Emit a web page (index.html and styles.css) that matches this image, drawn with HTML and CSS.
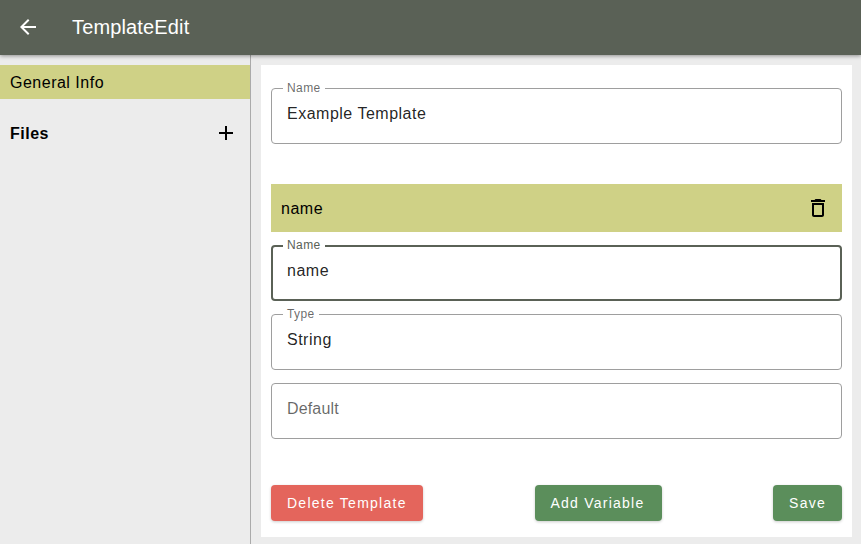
FILE: index.html
```html
<!DOCTYPE html>
<html lang="en">
<head>
<meta charset="utf-8">
<title>TemplateEdit</title>
<link rel="stylesheet" href="styles.css">
</head>
<body>
<header class="topbar">
  <svg class="icon" viewBox="0 0 24 24"><path d="M20 11H7.83l5.59-5.59L12 4l-8 8 8 8 1.41-1.41L7.83 13H20v-2z"/></svg>
  <h1 class="title">TemplateEdit</h1>
</header>
<div class="layout">
  <nav class="sidebar">
    <div class="nav-item">General Info</div>
    <div class="files"><span class="heading">Files</span>
      <svg class="icon" viewBox="0 0 24 24"><path d="M19 13h-6v6h-2v-6H5v-2h6V5h2v6h6v2z"/></svg>
    </div>
  </nav>
  <main class="panel">
    <div class="field"><span class="label">Name</span><span class="value">Example Template</span></div>
    <div class="variable-head"><span class="heading">name</span>
      <svg class="icon" viewBox="0 0 24 24"><path fill-rule="evenodd" d="M6 19c0 1.1.9 2 2 2h8c1.1 0 2-.9 2-2V7H6v12zM8 9h8v10H8V9zm7.500-5l-1-1h-5l-1 1H5v2h14V4h-3.500z"/></svg>
    </div>
    <div class="field focused"><span class="label">Name</span><span class="value">name</span></div>
    <div class="field"><span class="label">Type</span><span class="value">String</span></div>
    <div class="field"><span class="value placeholder">Default</span></div>
    <div class="actions">
      <button class="button danger">Delete Template</button>
      <button class="button add">Add Variable</button>
      <button class="button">Save</button>
    </div>
  </main>
</div>
</body>
</html>
```
FILE: styles.css
```css
* { box-sizing: border-box; }
body {
  margin: 0;
  height: 544px;
  overflow: hidden;
  display: flex;
  flex-direction: column;
  background: #ececec;
  color: #000;
  font: 16px/24px "Liberation Sans", Arial, sans-serif;
  letter-spacing: 0.5px;
}
.icon { width: 24px; height: 24px; fill: currentColor; display: block; flex: none; }
.topbar {
  position: relative;
  z-index: 1;
  height: 55px;
  flex: none;
  display: flex;
  align-items: center;
  gap: 32px;
  padding: 0 16px 1px;
  background: #5a6156;
  color: #fff;
  box-shadow: 0 1px 4px rgba(0, 0, 0, 0.4);
}
.title { margin: 0; font-size: 20px; font-weight: 400; letter-spacing: 0.15px; }
.layout { flex: 1; display: flex; }
.sidebar { width: 251px; border-right: 1px solid #aaa; padding-top: 10px; }
.nav-item { height: 34px; padding: 6px 10px 4px; background: #cfd186; }
.files {
  display: flex;
  align-items: center;
  justify-content: space-between;
  height: 48px;
  margin-top: 10px;
  padding: 0 12px 0 10px;
  font-weight: 700;
}
.heading { padding-top: 2px; }
.panel { width: 591px; height: 472px; margin: 10px 0 0 10px; padding: 23px 10px 0; background: #fff; }
.field {
  position: relative;
  height: 56px;
  margin-bottom: 13px;
  padding: 13px 15px;
  border: 1px solid #9e9e9e;
  border-radius: 4px;
}
.value { display: block; color: rgba(0, 0, 0, 0.87); }
.placeholder { color: rgba(0, 0, 0, 0.6); letter-spacing: 0.15px; }
.label {
  position: absolute;
  left: 11px;
  top: -9px;
  padding: 0 4px;
  background: #fff;
  color: rgba(0, 0, 0, 0.6);
  font-size: 12px;
  line-height: 16px;
  letter-spacing: 0.4px;
}
.focused { border: 2px solid #5a6156; padding: 12px 14px; }
.focused .label { left: 10px; top: -10px; color: #5a6156; }
.variable-head {
  display: flex;
  align-items: center;
  justify-content: space-between;
  height: 48px;
  margin: 40px 0 13px;
  padding: 0 12px 0 10px;
  background: #cfd186;
}
.actions { display: flex; justify-content: space-between; margin-top: 46px; }
.button {
  height: 36px;
  padding: 0 16px;
  border: 0;
  border-radius: 4px;
  background: #5b8e5b;
  color: #fff;
  font: 14px/36px "Liberation Sans", Arial, sans-serif;
  letter-spacing: 1.25px;
  box-shadow: 0 1px 3px rgba(0, 0, 0, 0.2);
}
.add { width: 127px; margin: 0 -1px 0 1px; padding: 0 15px; text-align: left; }
.danger { background: #e4655c; }
```
